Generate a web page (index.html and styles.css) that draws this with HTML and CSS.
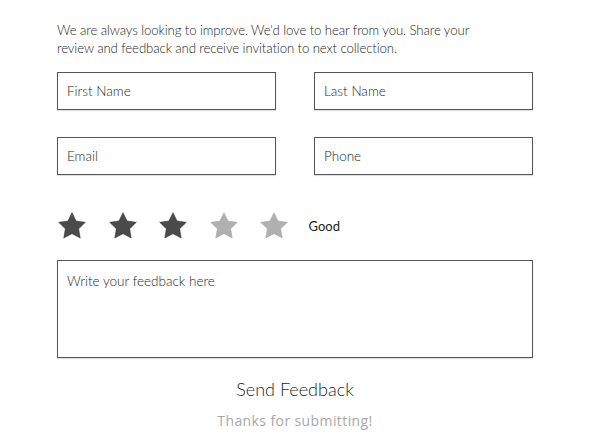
FILE: index.html
```html
<!DOCTYPE html>
<html>
<head>
<meta charset="utf-8">
<link rel="stylesheet" href="styles.css">
</head>
<body>
<div class="form">
  <p class="intro">We are always looking to improve. We'd love to hear from you. Share your<br>review and feedback and receive invitation to next collection.</p>
  <div class="grid">
    <div class="field">First Name</div>
    <div class="field">Last Name</div>
    <div class="field">Email</div>
    <div class="field">Phone</div>
  </div>
  <div class="rating">
    <svg class="star on" viewBox="0 0 24 24"><path d="M12 2l3.09 6.26L22 9.27l-5 4.87 1.18 6.88L12 17.77l-6.18 3.25L7 14.14 2 9.27l6.91-1.01L12 2z"/></svg>
    <svg class="star on" viewBox="0 0 24 24"><path d="M12 2l3.09 6.26L22 9.27l-5 4.87 1.18 6.88L12 17.77l-6.18 3.25L7 14.14 2 9.27l6.91-1.01L12 2z"/></svg>
    <svg class="star on" viewBox="0 0 24 24"><path d="M12 2l3.09 6.26L22 9.27l-5 4.87 1.18 6.88L12 17.77l-6.18 3.25L7 14.14 2 9.27l6.91-1.01L12 2z"/></svg>
    <svg class="star off" viewBox="0 0 24 24"><path d="M12 2l3.09 6.26L22 9.27l-5 4.87 1.18 6.88L12 17.77l-6.18 3.25L7 14.14 2 9.27l6.91-1.01L12 2z"/></svg>
    <svg class="star off" viewBox="0 0 24 24"><path d="M12 2l3.09 6.26L22 9.27l-5 4.87 1.18 6.88L12 17.77l-6.18 3.25L7 14.14 2 9.27l6.91-1.01L12 2z"/></svg>
    <span class="label">Good</span>
  </div>
  <div class="area">Write your feedback here</div>
  <div class="send">Send Feedback</div>
  <div class="thanks">Thanks for submitting!</div>
</div>
</body>
</html>
```

FILE: styles.css
```css
html, body {
  margin: 0;
  padding: 0;
  background: #fff;
}
body {
  font-family: "Lato", "Liberation Sans", sans-serif;
  color: #222;
}
.form {
  width: 476px;
  margin-left: 57px;
  padding-top: 21px;
}
.intro {
  margin: 0;
  font-size: 13.2px;
  letter-spacing: -0.1px;
  line-height: 18px;
  font-weight: 300;
  color: #1e1e1e;
}
.grid {
  display: grid;
  grid-template-columns: 219px 219px;
  column-gap: 38px;
  row-gap: 27px;
  margin-top: 15px;
}
.field {
  height: 38px;
  box-sizing: border-box;
  border: 1px solid #555;
  box-shadow: 0 1px 1px rgba(0,0,0,0.12);
  padding: 0 9px;
  display: flex;
  align-items: center;
  font-size: 13.5px;
  font-weight: 300;
  color: #1e1e1e;
}
.rating {
  display: flex;
  align-items: center;
  margin-top: 35px;
  margin-left: -1px;
  height: 32px;
}
.star {
  width: 32px;
  height: 32px;
  margin-right: 18.5px;
}
.star.on path {
  fill: #4a4a4a;
  stroke: #333;
  stroke-width: 0.4;
  stroke-linejoin: round;
}
.star.off path {
  fill: #b0b0b0;
  stroke: #a8a8a8;
  stroke-width: 0.4;
  stroke-linejoin: round;
}
.label {
  font-size: 13px;
  color: #222;
}
.area {
  margin-top: 18px;
  height: 98px;
  box-sizing: border-box;
  border: 1px solid #555;
  box-shadow: 0 1px 1px rgba(0,0,0,0.12);
  padding: 12px 9px;
  font-size: 13.5px;
  font-weight: 300;
  color: #1e1e1e;
}
.send {
  margin-top: 20px;
  text-align: center;
  font-size: 18px;
  font-weight: 300;
  color: #1e1e1e;
}
.thanks {
  margin-top: 11px;
  text-align: center;
  font-family: "Open Sans", "Liberation Sans", sans-serif;
  font-size: 14px;
  letter-spacing: 0.4px;
  color: #a8a8a8;
}
```
